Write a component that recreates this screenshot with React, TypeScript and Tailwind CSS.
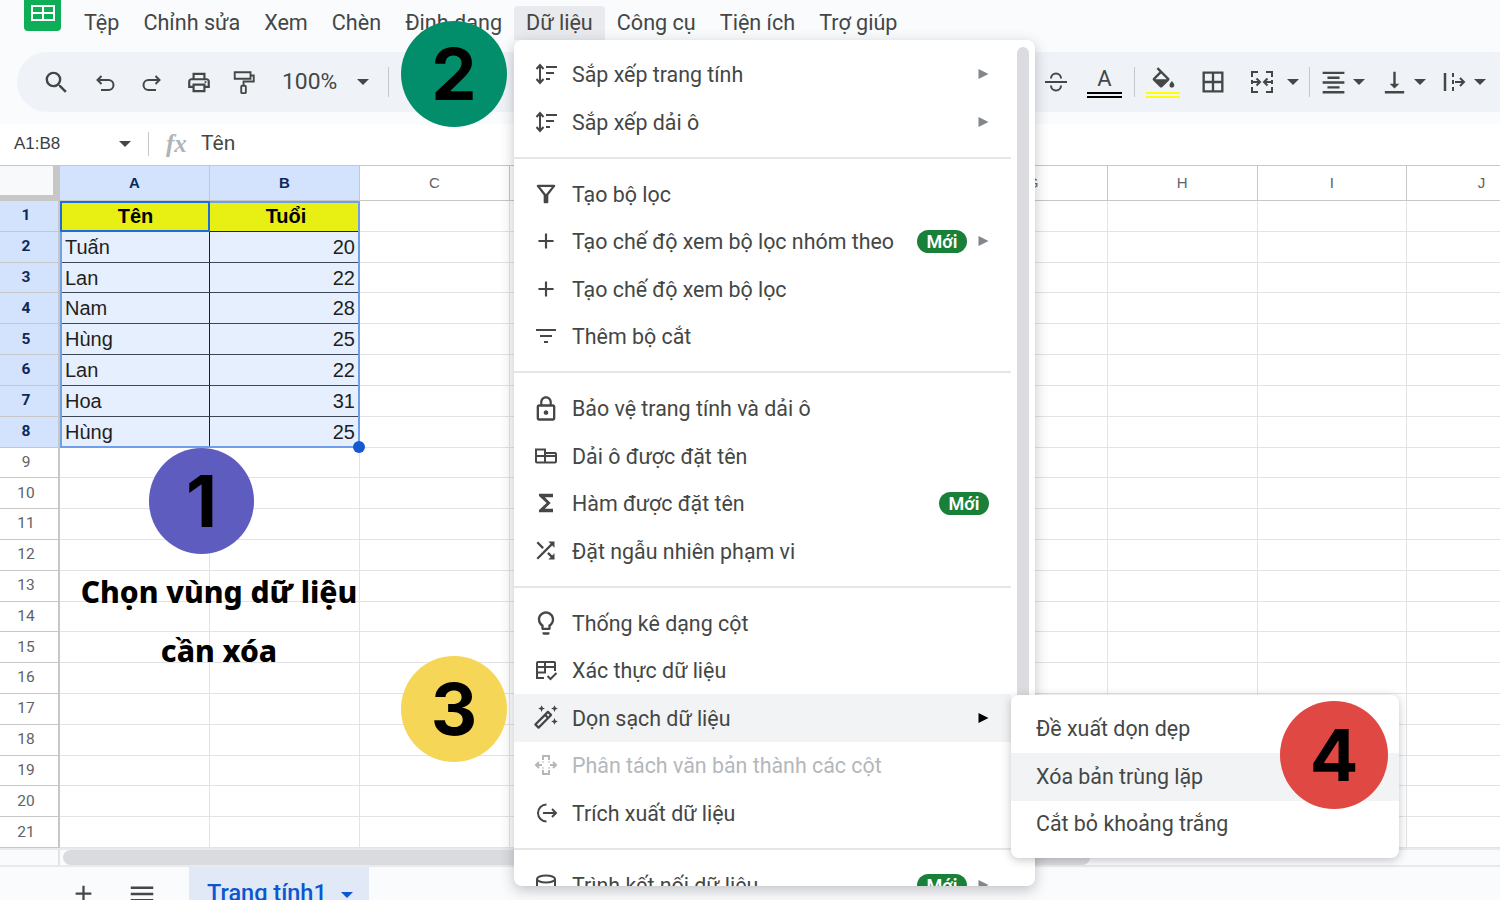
import {
  MdAdd,
  MdBorderAll,
  MdFormatAlignCenter,
  MdFunctions,
  MdLockOutline,
  MdMenu,
  MdOutlineAutoFixHigh,
  MdOutlineFilterAlt,
  MdOutlineLightbulb,
  MdOutlinePrint,
  MdSearch,
  MdShuffle,
  MdVerticalAlignBottom,
} from 'react-icons/md'
import type { ReactNode } from 'react'

const menuBar = ['Tệp', 'Chỉnh sửa', 'Xem', 'Chèn', 'Định dạng', 'Dữ liệu', 'Công cụ', 'Tiện ích', 'Trợ giúp']
const columns = ['A', 'B', 'C', 'D', 'E', 'F', 'G', 'H', 'I', 'J']
const rows = Array.from({ length: 21 }, (_, i) => i + 1)
const data: Record<number, [string, string]> = {
  1: ['Tên', 'Tuổi'],
  2: ['Tuấn', '20'],
  3: ['Lan', '22'],
  4: ['Nam', '28'],
  5: ['Hùng', '25'],
  6: ['Lan', '22'],
  7: ['Hoa', '31'],
  8: ['Hùng', '25'],
}

function Caret({ className = 'text-[#444746]' }: { className?: string }) {
  return (
    <svg width="14" height="8" viewBox="0 0 14 8" className={className}>
      <path d="M1 1h12L7 7z" fill="currentColor" />
    </svg>
  )
}

function UndoIcon({ flip }: { flip?: boolean }) {
  return (
    <svg width="24" height="24" viewBox="0 0 24 24" fill="none" stroke="currentColor" strokeWidth="2" className={flip ? '-scale-x-100' : ''}>
      <path d="M7.500 5 3.500 9l4 4" />
      <path d="M4 9h10.500a5 5 0 0 1 0 10H7" />
    </svg>
  )
}

function RollerIcon() {
  return (
    <svg width="28" height="28" viewBox="0 0 28 28" fill="none" stroke="currentColor" strokeWidth="2">
      <path d="M4 3.500h17v7H4z" />
      <path d="M21 7h3.500v6.500H13.500V18" />
      <rect x="11" y="18" width="5" height="8" rx="1" />
    </svg>
  )
}

function StrikeIcon() {
  return (
    <svg width="28" height="28" viewBox="0 0 28 28" fill="none" stroke="currentColor" strokeWidth="2">
      <path d="M3 14h22" />
      <path d="M9 10.500a5 5 0 0 1 10 0M9 17.500a5 5 0 0 0 10 0" />
    </svg>
  )
}

function FillIcon() {
  return (
    <svg width="29" height="24" viewBox="0 -1 24 20" fill="currentColor">
      <path d="M16.560 8.940 7.620 0 6.210 1.410l2.380 2.380-5.150 5.150c-.59.59-.59 1.540 0 2.120l5.500 5.500c.29.29.68.44 1.060.44s.77-.15 1.060-.44l5.500-5.500c.59-.58.59-1.530 0-2.120zM5.210 10 10 5.210 14.790 10H5.210zM19 11.500s-2 2.170-2 3.500c0 1.100.9 2 2 2s2-.9 2-2c0-1.330-2-3.500-2-3.500z" />
    </svg>
  )
}

function SortIcon() {
  return (
    <svg width="26" height="26" viewBox="0 0 26 26" fill="none" stroke="currentColor" strokeWidth="2">
      <path d="M7 5v16" />
      <path d="M3.500 8 7 4l3.500 4M3.500 18 7 22l3.500-4" />
      <path d="M13 6h11M13 12h8M13 18h4" />
    </svg>
  )
}

function NamedRangeIcon() {
  return (
    <svg width="24" height="24" viewBox="0 0 24 24" fill="none" stroke="currentColor" strokeWidth="2">
      <path d="M2 5.500h9v13H3a1 1 0 0 1-1-1zM2 12h20M11 9h10a1 1 0 0 1 1 1v7.500a1 1 0 0 1-1 1H11" />
    </svg>
  )
}

function ValidationIcon() {
  return (
    <svg width="24" height="24" viewBox="0 0 24 24" fill="none" stroke="currentColor" strokeWidth="2">
      <path d="M10 20H3V5a1 1 0 0 1 1-1h16a1 1 0 0 1 1 1v8M3 9h18M3 14.500h9M11 4v10" />
      <path d="m13.500 18 3 3 6-6" />
    </svg>
  )
}

function SplitIcon() {
  return (
    <svg width="24" height="24" viewBox="0 0 24 24" fill="none" stroke="currentColor" strokeWidth="2">
      <path d="M9 7V3h6v4M9 17v4h6v-4M2 12h6M5 9l-3 3 3 3M22 12h-6M19 9l3 3-3 3M9 8.500v1M15 8.500v1M9 14.500v1M15 14.500v1" />
    </svg>
  )
}

function ExtractIcon() {
  return (
    <svg width="24" height="24" viewBox="0 0 24 24" fill="none" stroke="currentColor" strokeWidth="2">
      <path d="M12.500 3.500a8.500 8.500 0 1 0 0 17" />
      <path d="M9 12h13M18 8l4 4-4 4" />
    </svg>
  )
}

function ConnectorIcon() {
  return (
    <svg width="24" height="24" viewBox="0 0 24 24" fill="none" stroke="currentColor" strokeWidth="2">
      <ellipse cx="12" cy="6" rx="9" ry="3.500" />
      <path d="M3 6v12c0 2 4 3.500 9 3.500s9-1.500 9-3.500V6" />
    </svg>
  )
}

function SlicerIcon() {
  return (
    <svg width="24" height="24" viewBox="0 0 24 24" fill="none" stroke="currentColor" strokeWidth="2">
      <path d="M2 6h20M6 12h12M10 18h4" />
    </svg>
  )
}

function MergeIcon() {
  return (
    <svg width="26" height="26" viewBox="0 0 26 26" fill="none" stroke="currentColor" strokeWidth="2">
      <path d="M9 3H3v5M3 11v4M3 18v5h6M17 3h6v5M23 18v5h-6M23 11v4" />
      <path d="M4 13h6M7.500 9.500 11 13l-3.500 3.500M22 13h-6M18.500 9.500 15 13l3.500 3.500" />
    </svg>
  )
}

function WrapIcon() {
  return (
    <svg width="24" height="24" viewBox="0 0 24 24" fill="none" stroke="currentColor" strokeWidth="2">
      <path d="M3 3v18" strokeWidth="2.500" />
      <path d="M11 3v4M11 10v4M11 17v4M13 12h9M18 8l4 4-4 4" />
    </svg>
  )
}

function ToolIcon({ children, className = '' }: { children: ReactNode; className?: string }) {
  return <span className={`flex items-center justify-center text-[#444746] ${className}`}>{children}</span>
}

function Toolbar() {
  return (
    <div className="mt-[6px] ml-[17px] flex h-[60px] items-center rounded-l-[30px] bg-[#eff3f8]">
      <ToolIcon className="ml-[24px] w-[30px]">
        <MdSearch size={29} />
      </ToolIcon>
      <ToolIcon className="ml-[22px] w-[26px] pt-[2px]">
        <UndoIcon />
      </ToolIcon>
      <ToolIcon className="ml-[19px] w-[26px] pt-[2px]">
        <UndoIcon flip />
      </ToolIcon>
      <ToolIcon className="ml-[22px] w-[26px]">
        <MdOutlinePrint size={29} />
      </ToolIcon>
      <ToolIcon className="ml-[19px] w-[26px]">
        <RollerIcon />
      </ToolIcon>
      <span className="ml-[25px] pt-[1px] text-[22.9px] text-[#444746]">100%</span>
      <span className="ml-[19px] flex">
        <Caret />
      </span>
      <span className="ml-[18px] h-[30px] w-px bg-[#c7c7c7]" />

      <ToolIcon className="ml-[652px] w-[30px]">
        <StrikeIcon />
      </ToolIcon>
      <span className="ml-[15px] flex w-[36px] flex-col items-center text-[#444746]">
        <span className="text-[22px] leading-[24px]">A</span>
        <span className="mt-[1px] h-[6px] w-[35px] border-y-2 border-black" />
      </span>
      <span className="ml-[12px] h-[30px] w-px bg-[#c7c7c7]" />
      <span className="ml-[11px] flex w-[34px] flex-col items-center text-[#444746]">
        <FillIcon />
        <span className="mt-[2px] h-[6px] w-[34px] border-y-2 border-[#ffff00]" />
      </span>
      <ToolIcon className="ml-[18px] w-[30px]">
        <MdBorderAll size={28} />
      </ToolIcon>
      <ToolIcon className="ml-[19px] w-[30px]">
        <MergeIcon />
      </ToolIcon>
      <span className="ml-[9px] flex">
        <Caret />
      </span>
      <span className="ml-[9px] h-[30px] w-px bg-[#c7c7c7]" />
      <ToolIcon className="ml-[8px] w-[30px]">
        <MdFormatAlignCenter size={29} />
      </ToolIcon>
      <span className="ml-[4px] flex">
        <Caret />
      </span>
      <ToolIcon className="ml-[13px] w-[30px]">
        <MdVerticalAlignBottom size={29} />
      </ToolIcon>
      <span className="ml-[4px] flex">
        <Caret />
      </span>
      <ToolIcon className="ml-[14px] w-[26px]">
        <WrapIcon />
      </ToolIcon>
      <span className="ml-[6px] flex">
        <Caret />
      </span>
    </div>
  )
}

function Header() {
  return (
    <div className="h-[124px] shrink-0 overflow-hidden bg-[#f9fbfd]">
      <div className="flex h-[46px] items-start">
        <div className="relative -mt-[12px] ml-[24px] flex h-[43px] w-[37px] items-center justify-center rounded-[4px] bg-[#0ead57]">
          <div className="mt-[6px] grid h-[16px] w-[24px] grid-cols-2 gap-[2px] border-2 border-white bg-white">
            <span className="bg-[#0ead57]" />
            <span className="bg-[#0ead57]" />
            <span className="bg-[#0ead57]" />
            <span className="bg-[#0ead57]" />
          </div>
        </div>
        <div className="ml-[23px] flex gap-[24px] pt-[9px] text-[21.6px] leading-[28px] text-[#444746]">
          {menuBar.map((label) => (
            <span key={label} className="relative whitespace-nowrap">
              {label === 'Dữ liệu' ? (
                <span className="absolute -inset-x-[12px] top-[-3px] h-[34px] rounded-t-[4px] bg-[#e8eaed]" />
              ) : null}
              <span className="relative">{label}</span>
            </span>
          ))}
        </div>
      </div>
      <Toolbar />
    </div>
  )
}

function FormulaBar() {
  return (
    <div className="flex h-[42px] shrink-0 items-center border-b border-[#c7c7c7] bg-white pb-[2px] text-[#3c4043]">
      <span className="ml-[14px] w-[104px] font-['Liberation_Sans'] text-[17px]">A1:B8</span>
      <Caret />
      <span className="ml-[16px] h-[24px] w-px bg-[#c7c7c7]" />
      <span className="ml-[17px] w-[35px] font-['Liberation_Serif'] text-[25px] font-bold text-[#b0b3b8] italic">fx</span>
      <span className="text-[21px] text-[#444746]">Tên</span>
    </div>
  )
}

function Sheet() {
  return (
    <div className="relative h-[682px] shrink-0 overflow-hidden bg-white">
      <div className="grid grid-cols-[60px_150px_150px_repeat(8,149.6px)] grid-rows-[35px_repeat(21,30.82px)]">
        <div className="border-r-[7px] border-b-[6px] border-[#c7c7c7] bg-[#f8f9fa]" />
        {columns.map((col) => {
          const active = col === 'A' || col === 'B'
          return (
            <div
              key={col}
              className={`flex items-center justify-center border-r border-b border-[#c7c7c7] font-['Liberation_Sans'] text-[15px] ${
                active ? 'bg-[#d3e3fd] font-bold text-[#0b2a5b]' : 'bg-white text-[#5f6368]'
              }`}
            >
              {col}
            </div>
          )
        })}
        {rows.map((row) => {
          const values = data[row]
          const selected = Boolean(values)
          return (
            <div key={row} className="contents">
              <div
                className={`flex items-center justify-center border-r-2 border-b border-[#c7c7c7] pr-[6px] font-['Roboto'] text-[15.5px] ${
                  selected ? 'bg-[#d3e3fd] font-bold text-[#0b2a5b]' : 'bg-white text-[#5f6368]'
                }`}
              >
                {row}
              </div>
              {columns.map((col, index) => {
                if (values && index < 2) {
                  const header = row === 1
                  const align = header ? 'justify-center pr-[3px] pl-[5px]' : index === 0 ? 'px-[5px]' : 'justify-end px-[5px]'
                  return (
                    <div
                      key={col}
                      className={`flex items-center overflow-hidden font-['Liberation_Sans'] text-[20px] text-[#1f1f1f] ${align} ${
                        index === 0 ? 'border-r border-r-[#202124]' : ''
                      } ${header ? 'border-b border-b-[#202124] bg-[#e8ef12] font-bold text-black' : 'border-b border-b-[#3d4654] bg-[#e6effd]'}`}
                    >
                      {values[index]}
                    </div>
                  )
                }
                return <div key={col} className="border-r border-b border-[#e1e3e6]" />
              })}
            </div>
          )
        })}
      </div>
      {/* selection frame over the grid */}
      <div className="pointer-events-none absolute top-[35px] left-[60px] h-[246.5px] w-[300px] border-2 border-[#6f9fe8]" />
      <div className="pointer-events-none absolute top-[35px] left-[60px] h-[31px] w-[150px] border-2 border-[#1a6fdc]" />
      <div className="absolute top-[275px] left-[353px] h-[12px] w-[12px] rounded-full bg-[#1559d0]" />
    </div>
  )
}

function ScrollStrip() {
  return (
    <div className="flex h-[19px] shrink-0 border-t-2 border-b-2 border-[#e8eaed] bg-[#f9fbfd]">
      <div className="h-full w-[60px] border-r-2 border-[#e1e3e6]" />
      <div className="ml-[3px] h-[15px] w-[1027px] rounded-full bg-[#d9dbdf]" />
    </div>
  )
}

function BottomBar() {
  return (
    <div className="flex min-h-0 flex-1 items-start overflow-hidden bg-[#f9fbfd] text-[#444746]">
      <span className="mt-[13px] ml-[70px] flex">
        <MdAdd size={27} />
      </span>
      <span className="mt-[12px] ml-[30px] flex">
        <MdMenu size={30} />
      </span>
      <div className="ml-[32px] flex h-[40px] w-[180px] items-start gap-[13px] bg-[#e1e9f7] pt-[14px] pl-[18px]">
        <span className="font-['Roboto'] text-[23.5px] leading-[24px] font-medium whitespace-nowrap text-[#0b57d0]">Trang tính1</span>
        <span className="mt-[10px] flex">
          <Caret className="text-[#0b57d0]" />
        </span>
      </div>
    </div>
  )
}

function Arrow({ dark }: { dark?: boolean }) {
  return (
    <svg width="11" height="12" viewBox="0 0 11 12" className={dark ? 'text-black' : 'text-[#80868b]'}>
      <path d="M0.500 1v10L10.500 6z" fill="currentColor" />
    </svg>
  )
}

function NewBadge() {
  return (
    <span className="flex h-[23px] w-[50px] items-center justify-center rounded-full bg-[#188038] text-[18px] font-semibold text-white">
      Mới
    </span>
  )
}

type Item = {
  icon: ReactNode
  label: string
  arrow?: boolean
  badge?: boolean
  active?: boolean
  disabled?: boolean
}

const groups: Item[][] = [
  [
    { icon: <SortIcon />, label: 'Sắp xếp trang tính', arrow: true },
    { icon: <SortIcon />, label: 'Sắp xếp dải ô', arrow: true },
  ],
  [
    { icon: <MdOutlineFilterAlt size={28} />, label: 'Tạo bộ lọc' },
    { icon: <MdAdd size={26} />, label: 'Tạo chế độ xem bộ lọc nhóm theo', arrow: true, badge: true },
    { icon: <MdAdd size={26} />, label: 'Tạo chế độ xem bộ lọc' },
    { icon: <SlicerIcon />, label: 'Thêm bộ cắt' },
  ],
  [
    { icon: <MdLockOutline size={28} />, label: 'Bảo vệ trang tính và dải ô' },
    { icon: <NamedRangeIcon />, label: 'Dải ô được đặt tên' },
    { icon: <MdFunctions size={28} />, label: 'Hàm được đặt tên', badge: true },
    { icon: <MdShuffle size={27} />, label: 'Đặt ngẫu nhiên phạm vi' },
  ],
  [
    { icon: <MdOutlineLightbulb size={28} />, label: 'Thống kê dạng cột' },
    { icon: <ValidationIcon />, label: 'Xác thực dữ liệu' },
    { icon: <MdOutlineAutoFixHigh size={27} />, label: 'Dọn sạch dữ liệu', arrow: true, active: true },
    { icon: <SplitIcon />, label: 'Phân tách văn bản thành các cột', disabled: true },
    { icon: <ExtractIcon />, label: 'Trích xuất dữ liệu' },
  ],
  [{ icon: <ConnectorIcon />, label: 'Trình kết nối dữ liệu', arrow: true, badge: true }],
]

function MenuRow({ item }: { item: Item }) {
  const tone = item.disabled ? 'text-[#b4b7bb]' : 'text-[#444746]'
  return (
    <div className={`flex h-[47.4px] shrink-0 items-center pr-[22px] ${item.active ? 'bg-[#f1f3f4]' : ''} ${tone}`}>
      <span className="flex w-[58px] shrink-0 justify-center pl-[5px]">{item.icon}</span>
      <span className="pt-[2px] whitespace-nowrap">{item.label}</span>
      {item.badge ? (
        <span className={`ml-auto ${item.arrow ? 'mr-[11px]' : ''}`}>
          <NewBadge />
        </span>
      ) : null}
      {item.arrow ? (
        <span className={`flex ${item.badge ? '' : 'ml-auto'}`}>
          <Arrow dark={item.active} />
        </span>
      ) : null}
    </div>
  )
}

function DataMenu() {
  return (
    <div className="absolute top-[40px] left-[514px] flex h-[846px] w-[521px] overflow-hidden rounded-[8px] bg-white text-[21.4px] shadow-[0_4px_14px_rgba(60,64,67,0.3)]">
      <div className="w-[497px] shrink-0 pt-[10.5px]">
        {groups.map((group, index) => (
          <div key={group[0].label}>
            {index > 0 ? <div className="my-[11.5px] h-[2px] bg-[#e6e6e6]" /> : null}
            {group.map((item) => (
              <MenuRow key={item.label} item={item} />
            ))}
          </div>
        ))}
      </div>
      <div className="mt-[7px] ml-[6px] h-[700px] w-[12px] rounded-full bg-[#dadce0]" />
    </div>
  )
}

function CleanupMenu() {
  return (
    <div className="absolute top-[695px] left-[1011px] flex w-[388px] flex-col rounded-[8px] bg-white pt-[10.5px] pb-[9.5px] text-[21.4px] text-[#444746] shadow-[0_2px_10px_rgba(60,64,67,0.3)]">
      <div className="flex h-[47.5px] items-center pl-[25px]">Đề xuất dọn dẹp</div>
      <div className="flex h-[47.5px] items-center bg-[#f1f3f4] pl-[25px]">Xóa bản trùng lặp</div>
      <div className="flex h-[47.5px] items-center pl-[25px]">Cắt bỏ khoảng trắng</div>
    </div>
  )
}

function Step({ value, className }: { value: string; className: string }) {
  return (
    <div
      className={`absolute flex items-center justify-center rounded-full font-['Inter'] text-[72px] leading-none font-bold text-black ${className}`}
    >
      {value}
    </div>
  )
}

export default function App() {
  return (
    <div className="relative flex h-[900px] w-[1500px] flex-col overflow-hidden bg-white font-['Roboto',sans-serif]">
      <Header />
      <FormulaBar />
      <Sheet />
      <ScrollStrip />
      <BottomBar />

      <DataMenu />
      <CleanupMenu />

      <Step value="1" className="top-[448px] left-[149px] h-[106px] w-[105px] bg-[#5e5cbf]" />
      <Step value="2" className="top-[21px] left-[401px] h-[106px] w-[106px] bg-[#028e6a]" />
      <Step value="3" className="top-[656px] left-[401px] h-[106px] w-[106px] bg-[#f5d657]" />
      <Step value="4" className="top-[701px] left-[1280px] h-[108px] w-[108px] bg-[#e04843]" />

      <div className="absolute top-[562px] left-[60px] w-[318px] text-center font-['Noto_Sans'] text-[30px] leading-[59px] font-extrabold text-black">
        Chọn vùng dữ liệu
        <br />
        cần xóa
      </div>
    </div>
  )
}
